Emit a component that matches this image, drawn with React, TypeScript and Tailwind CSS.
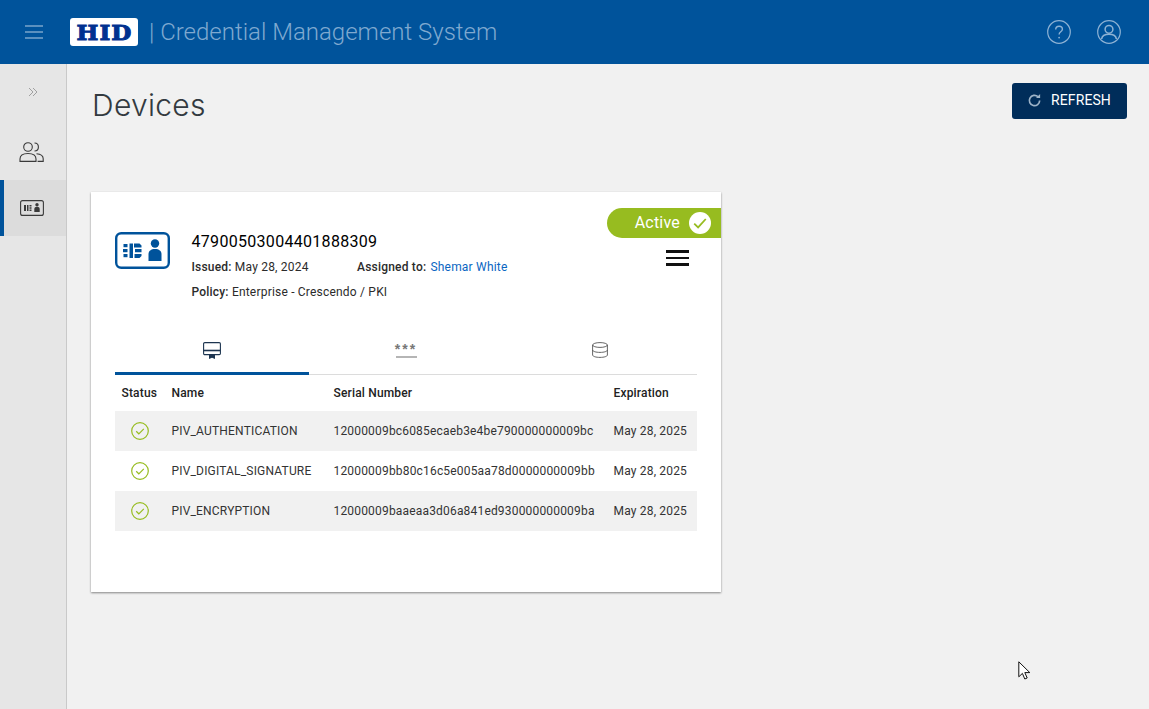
import React from "react";

const rows = [
  ["PIV_AUTHENTICATION", "12000009bc6085ecaeb3e4be790000000009bc", "May 28, 2025"],
  ["PIV_DIGITAL_SIGNATURE", "12000009bb80c16c5e005aa78d0000000009bb", "May 28, 2025"],
  ["PIV_ENCRYPTION", "12000009baaeaa3d06a841ed930000000009ba", "May 28, 2025"],
];

function CardIcon({ className, color }: { className?: string; color: string }) {
  return (
    <svg viewBox="0 0 55 37" className={className} fill="none">
      <rect x="1.2" y="1.2" width="52.6" height="34.6" rx="5" stroke={color} strokeWidth="2.4" />
      <g fill={color}>
        <rect x="8.5" y="12" width="4" height="3.2" />
        <rect x="8" y="17" width="4.5" height="3.2" />
        <rect x="8.5" y="22" width="4" height="3.2" />
        <path d="M14.5 11.5h3.5v14.5h-3.5z" />
        <path d="M19 11.5h5.5l2 2v2h-7.5zM20 17h6.5v3.2h-6.5zM19.5 22h7v2l-2 2h-5z" />
        <circle cx="40" cy="11.5" r="4.2" />
        <path d="M33.5 29v-7c0-3 2.5-5 6.5-5s6.5 2 6.5 5v7z" />
      </g>
    </svg>
  );
}

function RowCheck() {
  return (
    <svg viewBox="0 0 18 18" className="w-[18px] h-[18px]" fill="none" stroke="#97bc20">
      <circle cx="9" cy="9" r="8.3" strokeWidth="1.2" />
      <path d="M5.2 9.3l2.6 2.5 5-5" strokeWidth="1.2" />
    </svg>
  );
}

export default function App() {
  const font = "font-['Roboto',sans-serif]";
  return (
    <div className={`relative flex flex-col h-[709px] w-[1149px] overflow-hidden bg-[#f1f1f1] ${font}`}>
      <header className="flex items-center h-16 shrink-0 bg-[#00539b] pl-[25px] pr-[28px]">
        <div className="flex flex-col gap-[4px] w-[18px]">
          <span className="block h-[2px] bg-[#5b90bf]" />
          <span className="block h-[2px] bg-[#5b90bf]" />
          <span className="block h-[2px] bg-[#5b90bf]" />
        </div>
        <div className="ml-[27px] flex items-center justify-center w-[68px] h-[28px] bg-white rounded-[3px]">
          <span className="font-['DejaVu_Serif',serif] font-bold text-[#00318f] text-[21px] leading-none tracking-[1px] scale-x-[1.1] [-webkit-text-stroke:1px_#00318f]">HID</span>
        </div>
        <span className="ml-[11px] text-[24px] font-light text-[#7fa9d0] leading-none whitespace-nowrap">| Credential Management System</span>
        <div className="ml-auto flex items-center gap-[26px]">
          <svg viewBox="0 0 24 24" className="w-[24px] h-[24px]" fill="none" stroke="#8db2d4" strokeWidth="1.2">
            <circle cx="12" cy="12" r="11.3" />
            <path d="M8.7 9.5c0-2 1.5-3.3 3.4-3.3s3.3 1.2 3.3 3c0 2.6-3.3 2.6-3.3 5.2" strokeWidth="1.4" />
            <circle cx="12.1" cy="17.6" r="0.9" fill="#8db2d4" stroke="none" />
          </svg>
          <svg viewBox="0 0 24 24" className="w-[24px] h-[24px]" fill="none" stroke="#8db2d4" strokeWidth="1.2">
            <circle cx="12" cy="12" r="11.3" />
            <circle cx="12" cy="9.3" r="3.9" strokeWidth="1.5" />
            <path d="M4.6 19c.5-3.4 3.4-4.8 7.4-4.8s6.9 1.4 7.4 4.8" strokeWidth="1.6" />
          </svg>
        </div>
      </header>
      <div className="flex flex-1 min-h-0">
        <aside className="w-[67px] shrink-0 bg-[#e6e6e6] border-r border-[#c9c9c9] flex flex-col">
          <div className="h-[56px] flex items-center justify-center pr-[1px]">
            <svg viewBox="0 0 10 10" className="w-[10px] h-[10px]" fill="none" stroke="#8e8e8e" strokeWidth="0.8">
              <path d="M1 1l4 4-4 4M5 1l4 4-4 4" />
            </svg>
          </div>
          <div className="h-[60px] flex items-center justify-center pt-[4px] pr-[3px]">
            <svg viewBox="0 0 25 20" className="w-[25px] h-[20px]" fill="none" stroke="#3a3a3a" strokeWidth="1.1">
              <circle cx="9" cy="5" r="4.3" />
              <path d="M15.5 1c2.4 0 3.9 1.8 3.9 4s-1.5 4-3.9 4" />
              <path d="M1 19.4v-2.4c0-3.4 3-5.5 8-5.5s8 2.1 8 5.5v2.4z" />
              <path d="M17.5 11.8c4 .3 6.7 2 6.7 5v2.6h-5.6" />
            </svg>
          </div>
          <div className="h-[56px] flex items-center justify-center bg-[#dcdcdc] border-l-[4px] border-[#00539b] pr-[6px]">
            <svg viewBox="0 0 24 16" className="w-[24px] h-[16px]" fill="none">
              <rect x="0.6" y="0.6" width="22.8" height="14.8" rx="2" stroke="#3a3a3a" strokeWidth="1.1" />
              <g fill="#3a3a3a">
                <path d="M4 5h2v6H4zM7 5h1.5v6H7zM9.5 5h2v1.5h-2zM9.5 7.3h2v1.5h-2zM9.5 9.5h2V11h-2z" />
                <circle cx="17" cy="4.8" r="1.7" />
                <path d="M14.3 12V9c0-1.4 1.1-2.3 2.7-2.3s2.7.9 2.7 2.3v3z" />
              </g>
            </svg>
          </div>
        </aside>
        <main className="flex-1 min-w-0 pl-[24px] pr-[22px]">
          <div className="flex items-start justify-between pt-[19px] h-[128px]">
            <h1 className="font-['Inter',sans-serif] font-light text-[30px] leading-[44px] text-[#333a40] whitespace-nowrap pl-[1px] tracking-[0.3px]">Devices</h1>
            <button className="flex items-center justify-center gap-[9px] w-[115px] h-[36px] rounded-[3px] bg-[#002d5a] text-white text-[14px] font-normal tracking-[0.1px] pr-[1px] pb-[1px]">
              <svg viewBox="0 0 16 16" className="w-[15px] h-[15px]" fill="none" stroke="#9db3c8" strokeWidth="1.8">
                <path d="M13.5 8a5.5 5.5 0 1 1-1.8-4.1" />
                <path d="M14 1v4.4H9.6z" fill="#9db3c8" stroke="none" />
              </svg>
              REFRESH
            </button>
          </div>
          <section className="relative w-[630px] h-[400px] bg-white shadow-[0_1px_2px_rgba(0,0,0,0.45)] px-[24px] pt-[40px]">
            <div className="absolute right-0 top-[16px] flex items-center justify-end w-[114px] h-[30px] rounded-l-full bg-[#97bc20] pr-[10px] gap-[9px] text-white text-[16px] font-normal tracking-[0.2px]">
              <span>Active</span>
              <svg viewBox="0 0 21 21" className="w-[22px] h-[22px]">
                <circle cx="10.5" cy="10.5" r="10.5" fill="#fff" />
                <path d="M5 11l3.7 3.7 7.3-8" fill="none" stroke="#97bc20" strokeWidth="1.7" />
              </svg>
            </div>
            <div className="flex h-[99px]">
              <CardIcon className="w-[55px] h-[37px] shrink-0" color="#00539b" />
              <div className="ml-[21.5px] flex flex-col text-[12px] leading-[16px] tracking-[0.2px] text-[#2b2b2b]">
                <div className="text-[16px] leading-[20px] font-normal text-black tracking-[0.3px]">47900503004401888309</div>
                <div className="mt-[7px] flex">
                  <div className="w-[165.5px]"><span className="font-medium">Issued:</span> May 28, 2024</div>
                  <div><span className="font-medium">Assigned to:</span> <span className="ml-[1px] text-[#0a66c2]">Shemar White</span></div>
                </div>
                <div className="mt-[9px]"><span className="font-medium">Policy:</span> Enterprise - Crescendo / PKI</div>
              </div>
              <div className="ml-auto mr-[8px] mt-[18px] flex flex-col gap-[4px] w-[23px]">
                <span className="block h-[2.5px] bg-[#111]" />
                <span className="block h-[2.5px] bg-[#111]" />
                <span className="block h-[2.5px] bg-[#111]" />
              </div>
            </div>
            <div className="grid grid-cols-3 h-[44px] border-b border-[#dcdcdc]">
              <div className="flex items-start justify-center pt-[11px] border-b-[3px] border-[#00539b] h-[44px]">
                <svg viewBox="0 0 18 18" className="w-[18px] h-[18px]" fill="none" stroke="#1d3550" strokeWidth="1.1">
                  <rect x="0.6" y="0.6" width="16.8" height="12" rx="1.2" />
                  <path d="M0.6 8.5h16.8" strokeWidth="1.6" />
                  <path d="M6 13h6v4l-3-1.2L6 17z" fill="#1d3550" stroke="none" />
                </svg>
              </div>
              <div className="flex flex-col items-center pt-[12px]">
                <span className="text-[14px] leading-[12px] tracking-[2px] font-bold text-[#777] font-['Liberation_Sans',sans-serif]">***</span>
                <span className="block w-[21px] h-[2px] mt-[1px] bg-[#b5b5b5]" />
              </div>
              <div className="flex items-start justify-center pt-[11px]">
                <svg viewBox="0 0 16 16" className="w-[16px] h-[16px]" fill="none" stroke="#555" strokeWidth="0.9">
                  <ellipse cx="8" cy="3" rx="7.4" ry="2.4" />
                  <path d="M0.6 3v10c0 1.4 3.3 2.4 7.4 2.4s7.4-1 7.4-2.4V3" />
                  <path d="M0.6 8c0 1.4 3.3 2.4 7.4 2.4s7.4-1 7.4-2.4" />
                </svg>
              </div>
            </div>
            <div className="grid grid-cols-[50px_162px_280px_1fr] items-center h-[36px] text-[12px] font-medium text-[#222] tracking-[0.17px]">
              <div className="pl-[6.5px]">Status</div>
              <div className="pl-[6.5px]">Name</div>
              <div className="pl-[6.5px]">Serial Number</div>
              <div className="pl-[6.5px]">Expiration</div>
            </div>
            {rows.map((r, i) => (
              <div key={r[0]} className={`grid grid-cols-[50px_162px_280px_1fr] items-center h-[40px] text-[12px] text-[#333] tracking-[0.18px] ${i % 2 === 0 ? "bg-[#f1f1f1]" : "bg-white"}`}>
                <div className="flex justify-center"><RowCheck /></div>
                <div className="pl-[6.5px] whitespace-nowrap">{r[0]}</div>
                <div className="pl-[6.5px] whitespace-nowrap">{r[1]}</div>
                <div className="pl-[6.5px] whitespace-nowrap">{r[2]}</div>
              </div>
            ))}
          </section>
        </main>
      </div>
      <svg viewBox="0 0 14 20" className="absolute left-[1018px] top-[661px] w-[14px] h-[20px]" fill="#fff" stroke="#111" strokeWidth="1">
        <path d="M0.8 0.8v15l3.6-3.4 2.4 5.6 2.4-1-2.4-5.4h5z" />
      </svg>
    </div>
  );
}
